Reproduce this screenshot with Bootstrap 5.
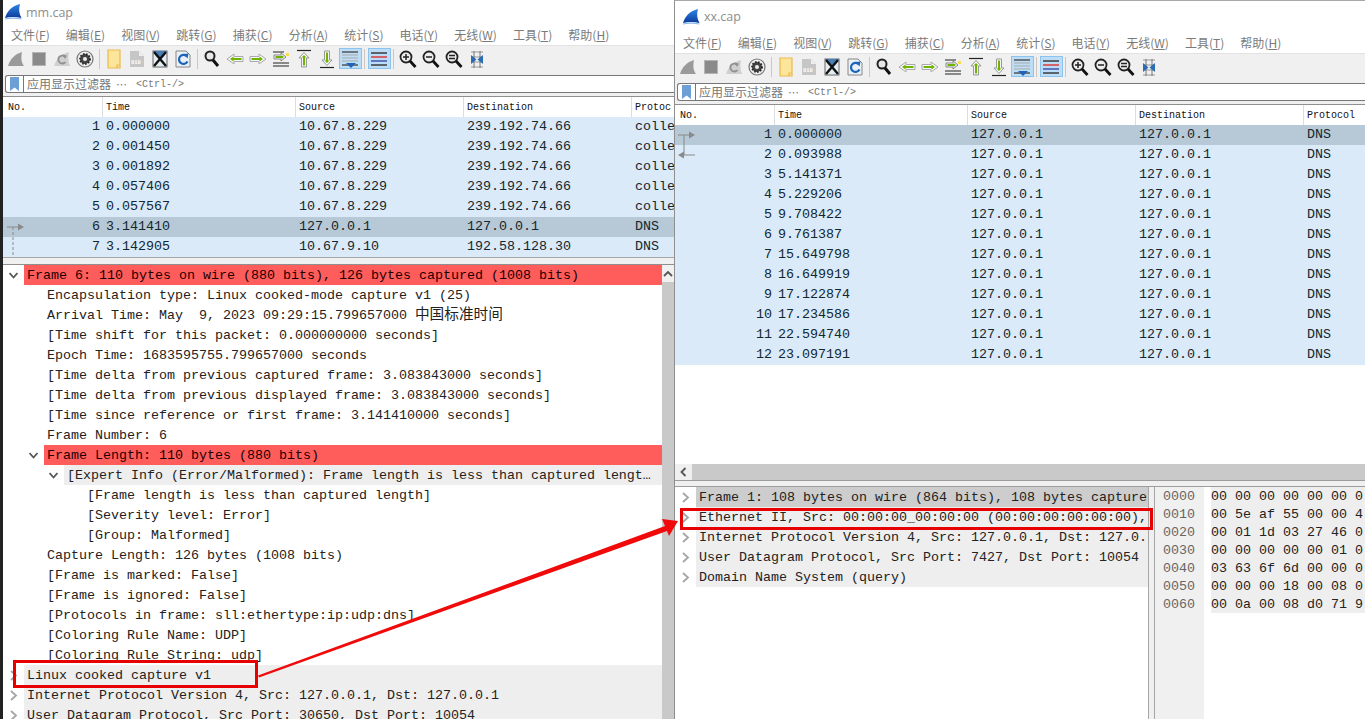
<!DOCTYPE html>
<html lang="zh-CN">
<head>
<meta charset="UTF-8" />
<title>mm.cap / xx.cap</title>
<link href="https://cdn.jsdelivr.net/npm/bootstrap@5.3.0/dist/css/bootstrap.min.css" rel="stylesheet" />
<style>
  body { background: #3a3a3a; width: 1365px; height: 719px; overflow: hidden; }
  /* windows on the desktop */
  .ws-win { top: 0; height: 719px; background: #fff; overflow: hidden; }
  #win-left { left: 3px; width: 672px; }
  #win-right { left: 674px; width: 691px; border-left: 1px solid #8f8f8f; border-top: 1px solid #a8a8a8; }
  .ws-title { height: 24px; color: #8e8e8e; font: 12.5px "Open Sans", "Liberation Sans", sans-serif; padding-left: 2px; gap: 4px; flex: none; }
  #win-right .ws-title { height: 31px; padding-left: 8px; }
  .ws-menu { height: 21px; padding-left: 8px; gap: 16.1px; color: #7b7b7b; font: 12px "Noto Sans CJK SC", sans-serif; flex: none; }
  .ws-menu u { text-underline-offset: 1px; }
  .ws-tools { height: 28px; background: #f0f0f0; border-top: 1px solid #e2e2e2; padding: 0 0 2px 1.5px; flex: none; }
  .ws-btn { width: 23px; height: 21px; flex: none; }
  .ws-btn.on { background: #bddcf5; border: 1px solid #8cc2ee; }
  .ws-btn svg { width: 20px; height: 20px; }
  .ws-sep { width: 6px; height: 20px; flex: none; position: relative; }
  .ws-sep::after { content: ""; position: absolute; left: 2px; top: 0; width: 1px; height: 20px; background: #c8c8c8; }
  .ws-filter-wrap { height: 24px; padding: 2px 0 3px 2px; background: #f0f0f0; border-bottom: 1px solid #8f8f8f; flex: none; }
  .ws-filter { height: 18px; border: 1.5px solid #777; border-right: 0; border-radius: 3px 0 0 3px; background: #fff; color: #777; font: 12px "Noto Sans CJK SC", sans-serif; }
  .ws-mark { width: 18px; height: 100%; border-right: 1px solid #777; flex: none; }
  .ws-mark svg { width: 9px; height: 14px; }
  .ws-label { margin: -2px 0 0 3px; }
  .ws-hint { font: 10px "Liberation Mono", monospace; margin-left: 8px; }
  .ws-dots { margin-left: 5px; font-size: 11px; letter-spacing: 1px; }
  .ws-head { height: 20px; font: 10px "Liberation Mono", monospace; color: #111; flex: none; }
  .ws-head > div { border-left: 1px solid #dcdcdc; padding-left: 3px; line-height: 22px; flex: none; }
  .ws-head > .c0 { width: 99px; border-left: 0; padding-left: 5px; }
  .ws-head > .c1 { width: 193px; }
  .ws-head > .c2, .ws-head > .c3 { width: 168px; }
  .ws-head > .c4 { width: 40px; overflow: hidden; }
  #win-right .ws-head > .c4 { width: 70px; }
  .ws-mono { font: 13.33px/20px "Liberation Mono", monospace; white-space: pre; }
  .pk-row { height: 20px; background: #daeaf9; color: #12272e; }
  .pk-row.sel { background: #b7c8d6; }
  .pk-no { width: 103px; padding-right: 6px; text-align: right; flex: none; }
  .pk-time { width: 193px; flex: none; }
  .pk-addr { width: 168px; flex: none; }
  #list-left { height: 140px; flex: none; }
  #list-right { height: 339px; flex: none; }
  .pk-mark { position: absolute; left: 0; top: 0; pointer-events: none; }
  .ws-split { height: 8px; background: #f0f0f0; border-top: 1px solid #a6a6a6; border-bottom: 1px solid #8f8f8f; flex: none; }
  .ws-scroll-h { height: 16px; background: #c9c9c9; flex: none; }
  .ws-scroll-h span { width: 17px; background: #f0f0f0; }
  .ws-split2 { height: 7px; background: #f0f0f0; border-top: 1px solid #9c9c9c; border-bottom: 1px solid #9c9c9c; flex: none; }
  .tr-row { height: 20px; color: #222; }
  .tr-arrow { flex: none; padding-right: 6px; height: 20px; }
  .tr-arrow svg { width: 9px; height: 20px; }
  .l0 .tr-arrow { width: 21px; }
  .l1 .tr-arrow { width: 41px; }
  .l2 .tr-arrow { width: 61px; }
  .l3 .tr-arrow { width: 81px; }
  .tr-txt { padding-left: 3px; flex: 1 1 0; min-width: 0; overflow: hidden; line-height: 22px; }
  .tr-txt.bad { background: #ff5c5c; color: #1a0000; }
  .tr-txt.soft { background: #eee; }
  .tr-txt.cur { background: #cdcdcd; }
  .tr-cjk { font-family: "Liberation Mono", "Noto Sans CJK SC", monospace; }
  .tr-cn { font-size: 14.67px; line-height: 20px; }
  #tree-left { width: 659px; flex: none; }
  #bar-left { width: 13px; background: #c9c9c9; border-right: 1px solid #8f8f8f; flex: none; }
  #bar-left span { height: 17px; background: #f0f0f0; }
  #tree-right { width: 473px; flex: none; }
  #hex-split { width: 7px; flex: none; background: #f0f0f0; border-left: 1px solid #a6a6a6; border-right: 1px solid #a6a6a6; }
  .hx-off { width: 49px; flex: none; background: #f0f0f0; padding-left: 8px; color: #666; }
  .hx-body { margin-left: 7px; flex: 1 1 0; overflow: hidden; color: #222; }
  .hx-body div { background: #eee; }
  .hx-off div, .hx-body div { font: 13.33px/20px "Liberation Mono", monospace; height: 18px; white-space: pre; }
  .hx-wrap { height: 232px; }
  #overlay { left: 0; top: 0; pointer-events: none; }
  .red-box { border: 3px solid #e60000; }
  #box-a { left: 13px; top: 660px; width: 245px; height: 28px; }
  #box-b { left: 680px; top: 508px; width: 473px; height: 22px; }
  #edge { left: 0; top: 0; width: 3px; height: 719px; background: #222; }
</style>
</head>
<body class="position-relative">
<svg width="0" height="0" class="position-absolute">
  <defs>
    <linearGradient id="gf" x1="0" y1="0" x2="0" y2="1"><stop offset="0" stop-color="#2e86ea"/><stop offset="1" stop-color="#0c3a98"/></linearGradient>
    <symbol id="i-logo" viewBox="0 0 17 16"><path d="M0 14C2 8 6 2 15 0C13.500 5 14 10 16.500 14C11 12.800 5 12.800 0 14Z" fill="url(#gf)"/><path d="M0 14.500C5 13.300 11 13.300 16.500 14.500L16.500 15.500C11 14.500 5 14.500 0 15.500Z" fill="#8dbcec"/></symbol>
    <symbol id="i-fin" viewBox="0 0 20 20"><path d="M2 17C4 10 9 5 16 3C15 8 15 13 18 17Z" fill="#9a9a9a"/></symbol>
    <symbol id="i-stop" viewBox="0 0 20 20"><rect x="3.500" y="3.500" width="13" height="13" fill="#8a8a8a" stroke="#b5b5b5"/></symbol>
    <symbol id="i-refin" viewBox="0 0 20 20"><path d="M2 17C4 10 9 5 17 3C16 8 16 13 18 17Z" fill="#cfcfcf"/><path d="M13 7.500A4 4 0 1 0 13.500 13" fill="none" stroke="#8f8f8f" stroke-width="1.800"/><path d="M11 6L15 6.500L13 10Z" fill="#8f8f8f"/></symbol>
    <symbol id="i-gear" viewBox="0 0 20 20"><circle cx="10" cy="10" r="8" fill="#eee" stroke="#777" stroke-width="1.200"/><circle cx="10" cy="10" r="5" fill="#444"/><circle cx="10" cy="10" r="5" fill="none" stroke="#222" stroke-width="1.800" stroke-dasharray="1.500 1.500"/><circle cx="10" cy="10" r="2" fill="#eee"/></symbol>
    <symbol id="i-open" viewBox="0 0 20 20"><path d="M4 1H16V19H4Z" fill="#fde69c" stroke="#eab94a" stroke-width="1.200"/><path d="M13 19V16H16" fill="none" stroke="#eab94a" stroke-width="1.200"/></symbol>
    <symbol id="i-bin" viewBox="0 0 20 20"><path d="M3 2H12L17 7V18H3Z" fill="#c6c6c6"/><path d="M12 2V7H17" fill="#eee"/><text x="4" y="15" font-size="5.500" font-family="Liberation Mono" font-weight="700" fill="#fff">010</text></symbol>
    <symbol id="i-close" viewBox="0 0 20 20"><rect x="3" y="2" width="14" height="16" fill="#e4edf4" stroke="#666"/><path d="M3 2H17L10 10Z" fill="#4a7fb5"/><path d="M4 3L16 17M16 3L4 17" stroke="#111" stroke-width="2.400"/></symbol>
    <symbol id="i-reload" viewBox="0 0 20 20"><path d="M3 2H13L17 6V18H3Z" fill="#e9f0f7" stroke="#888"/><path d="M13.500 7A4.500 4.500 0 1 0 14.500 12.500" fill="none" stroke="#1e63b8" stroke-width="2.200"/><path d="M10.500 5L15.500 4.500L14.500 9.500Z" fill="#1e63b8"/></symbol>
    <symbol id="i-find" viewBox="0 0 20 20"><circle cx="8" cy="7" r="4.500" fill="#e8e8e8" stroke="#222" stroke-width="2"/><path d="M11 11L16 17" stroke="#111" stroke-width="3"/></symbol>
    <symbol id="i-back" viewBox="0 0 20 20"><path d="M2 10L9 5V7.500H18V12.500H9V15Z" fill="#f6f6f6" stroke="#aaa"/><path d="M5 10L8.500 7.500V9H16.500V11H8.500V12.500Z" fill="#6fb400"/></symbol>
    <symbol id="i-fwd" viewBox="0 0 20 20"><path d="M18 10L11 5V7.500H2V12.500H11V15Z" fill="#f6f6f6" stroke="#aaa"/><path d="M15 10L11.500 7.500V9H3.500V11H11.500V12.500Z" fill="#6fb400"/></symbol>
    <symbol id="i-jump" viewBox="0 0 20 20"><path d="M2 3H13M2 14H18M2 17H18" stroke="#222" stroke-width="1.200"/><path d="M15 8L10 4V6H3V10H10V12Z" fill="#f6f6f6" stroke="#888"/><path d="M13 8L10.500 6V7H4.500V9H10.500V10Z" fill="#6fb400"/><rect x="15" y="4" width="3" height="3" fill="#f5dd55"/></symbol>
    <symbol id="i-first" viewBox="0 0 20 20"><path d="M3 1.500H17" stroke="#222" stroke-width="1.200"/><path d="M10 3.500L5 9H7.500V18H12.500V9H15Z" fill="#f6f6f6" stroke="#999"/><path d="M10 6L7.500 8.500H9V16.500H11V8.500H12.500Z" fill="#6fb400"/></symbol>
    <symbol id="i-last" viewBox="0 0 20 20"><path d="M3 18.500H17" stroke="#222" stroke-width="1.200"/><path d="M10 16.500L5 11H7.500V2H12.500V11H15Z" fill="#f6f6f6" stroke="#999"/><path d="M10 14L7.500 11.500H9V3.500H11V11.500H12.500Z" fill="#6fb400"/></symbol>
    <symbol id="i-auto" viewBox="0 0 20 20"><path d="M2 3H18" stroke="#333" stroke-width="1.200"/><path d="M2 6H18M2 9H18M2 12H18" stroke="#aaa"/><path d="M2 16H18" stroke="#333" stroke-width="1.200"/><path d="M6 14H16L11 19Z" fill="#1f63b5"/></symbol>
    <symbol id="i-color" viewBox="0 0 20 20"><path d="M2 4H18" stroke="#222" stroke-width="1.300"/><path d="M2 8H18" stroke="#e02020" stroke-width="1.300"/><path d="M2 12H18" stroke="#2a3ea8" stroke-width="1.300"/><path d="M2 16H18" stroke="#222" stroke-width="1.300"/></symbol>
    <symbol id="i-zin" viewBox="0 0 20 20"><circle cx="8" cy="8" r="5.500" fill="#eee" stroke="#222" stroke-width="1.800"/><path d="M12 12L17.500 18" stroke="#111" stroke-width="2.800"/><path d="M5 8H11M8 5V11" stroke="#222" stroke-width="1.500"/></symbol>
    <symbol id="i-zout" viewBox="0 0 20 20"><circle cx="8" cy="8" r="5.500" fill="#eee" stroke="#222" stroke-width="1.800"/><path d="M12 12L17.500 18" stroke="#111" stroke-width="2.800"/><path d="M5 8H11" stroke="#222" stroke-width="1.500"/></symbol>
    <symbol id="i-z100" viewBox="0 0 20 20"><circle cx="8" cy="8" r="5.500" fill="#eee" stroke="#222" stroke-width="1.800"/><path d="M12 12L17.500 18" stroke="#111" stroke-width="2.800"/><path d="M5 6.500H11M5 9.500H11" stroke="#222" stroke-width="1.300"/></symbol>
    <symbol id="i-cols" viewBox="0 0 20 20"><path d="M4 3H16M4 8H16M4 13H16M4 18H16" stroke="#999"/><path d="M7 2V19M13 2V19" stroke="#777"/><path d="M9.500 10.500L4 6V15ZM10.500 10.500L16 6V15Z" fill="#2b6cb5"/></symbol>
    <symbol id="i-mark" viewBox="0 0 9 14"><path d="M0 0H9V14L4.500 10.500L0 14Z" fill="#6b9fd6"/></symbol>
    <symbol id="i-chev-r" viewBox="0 0 9 20"><path d="M2 6L7 10.500L2 15" fill="none" stroke="#a5a5a5" stroke-width="1.800"/></symbol>
    <symbol id="i-chev-d" viewBox="0 0 9 20"><path d="M0.500 8L4.500 12.500L8.500 8" fill="none" stroke="#555" stroke-width="1.800"/></symbol>
  </defs>
</svg>

<div id="win-left" class="ws-win position-absolute d-flex flex-column"></div>
<div id="win-right" class="ws-win position-absolute d-flex flex-column"></div>
<div id="edge" class="position-absolute"></div>

<!-- 紅框與箭頭 -->
<div id="box-a" class="red-box position-absolute"></div>
<div id="box-b" class="red-box position-absolute"></div>
<svg id="overlay" class="position-absolute" width="1365" height="719">
  <path d="M258 675.500L665 526L662 519L678 521L669 536L667 531L259 677.500Z" fill="#f00a0a"/>
</svg>

<script>
  const menus = [["文件","F"],["编辑","E"],["视图","V"],["跳转","G"],["捕获","C"],["分析","A"],["统计","S"],["电话","Y"],["无线","W"],["工具","T"],["帮助","H"]];
  const tools = ["fin","stop","refin","gear","|","open","bin","close","reload","|","find","back","fwd","jump","first","last","auto*","|","color*","|","zin","zout","z100","cols"];

  function winTop(name, proto) {
    const menu = menus.map(([t, k]) => `<span>${t}(<u>${k}</u>)</span>`).join("");
    const bar = tools.map((t) => {
      if (t === "|") return `<div class="ws-sep"></div>`;
      const on = t.endsWith("*");
      const id = t.replace("*", "");
      return `<div class="ws-btn d-flex align-items-center justify-content-center ${on ? "on" : ""}"><svg><use href="#i-${id}"/></svg></div>`;
    }).join("");
    return `
      <div class="ws-title d-flex align-items-center"><svg width="17" height="16"><use href="#i-logo"/></svg><span>${name}</span></div>
      <div class="ws-menu d-flex align-items-center text-nowrap">${menu}</div>
      <div class="ws-tools d-flex align-items-center">${bar}</div>
      <div class="ws-filter-wrap">
        <div class="ws-filter d-flex align-items-center text-nowrap">
          <div class="ws-mark d-flex align-items-center justify-content-center"><svg><use href="#i-mark"/></svg></div>
          <span class="ws-label">应用显示过滤器</span><span class="ws-dots">⋯</span><span class="ws-hint">&lt;Ctrl-/&gt;</span>
        </div>
      </div>
      <div class="ws-head d-flex text-nowrap">
        <div class="c0">No.</div><div class="c1">Time</div><div class="c2">Source</div><div class="c3">Destination</div><div class="c4">${proto}</div>
      </div>`;
  }

  function rows(list, selected) {
    return list.map((r, i) => `<div class="pk-row ws-mono d-flex ${i === selected ? "sel" : ""}"><div class="pk-no">${i + 1}</div><div class="pk-time">${r[0]}</div><div class="pk-addr">${r[1]}</div><div class="pk-addr">${r[2]}</div><div>${r[3]}</div></div>`).join("");
  }

  function tree(list) {
    const chev = { r: "#i-chev-r", d: "#i-chev-d" };
    return list.map(([lv, txt, cls, c]) => `<div class="tr-row ws-mono d-flex l${lv}"><div class="tr-arrow d-flex justify-content-end">${c ? `<svg><use href="${chev[c]}"/></svg>` : ""}</div><div class="tr-txt tr-cjk ${cls || ""}">${txt}</div></div>`).join("");
  }

  const leftPk = [
    ["0.000000","10.67.8.229","239.192.74.66","colle"],
    ["0.001450","10.67.8.229","239.192.74.66","colle"],
    ["0.001892","10.67.8.229","239.192.74.66","colle"],
    ["0.057406","10.67.8.229","239.192.74.66","colle"],
    ["0.057567","10.67.8.229","239.192.74.66","colle"],
    ["3.141410","127.0.0.1","127.0.0.1","DNS"],
    ["3.142905","10.67.9.10","192.58.128.30","DNS"],
  ];
  const rightPk = ["0.000000","0.093988","5.141371","5.229206","9.708422","9.761387","15.649798","16.649919","17.122874","17.234586","22.594740","23.097191"]
    .map((t) => [t, "127.0.0.1", "127.0.0.1", "DNS"]);

  const leftTree = [
    [0,"Frame 6: 110 bytes on wire (880 bits), 126 bytes captured (1008 bits)","bad","d"],
    [1,"Encapsulation type: Linux cooked-mode capture v1 (25)"],
    [1,`Arrival Time: May  9, 2023 09:29:15.799657000 <span class="tr-cn">中国标准时间</span>`],
    [1,"[Time shift for this packet: 0.000000000 seconds]"],
    [1,"Epoch Time: 1683595755.799657000 seconds"],
    [1,"[Time delta from previous captured frame: 3.083843000 seconds]"],
    [1,"[Time delta from previous displayed frame: 3.083843000 seconds]"],
    [1,"[Time since reference or first frame: 3.141410000 seconds]"],
    [1,"Frame Number: 6"],
    [1,"Frame Length: 110 bytes (880 bits)","bad","d"],
    [2,"[Expert Info (Error/Malformed): Frame length is less than captured lengt…","soft","d"],
    [3,"[Frame length is less than captured length]"],
    [3,"[Severity level: Error]"],
    [3,"[Group: Malformed]"],
    [1,"Capture Length: 126 bytes (1008 bits)"],
    [1,"[Frame is marked: False]"],
    [1,"[Frame is ignored: False]"],
    [1,"[Protocols in frame: sll:ethertype:ip:udp:dns]"],
    [1,"[Coloring Rule Name: UDP]"],
    [1,"[Coloring Rule String: udp]"],
    [0,"Linux cooked capture v1","soft","r"],
    [0,"Internet Protocol Version 4, Src: 127.0.0.1, Dst: 127.0.0.1","soft","r"],
    [0,"User Datagram Protocol, Src Port: 30650, Dst Port: 10054","soft","r"],
  ];
  const rightTree = [
    [0,"Frame 1: 108 bytes on wire (864 bits), 108 bytes capture","cur","r"],
    [0,"Ethernet II, Src: 00:00:00_00:00:00 (00:00:00:00:00:00),","soft","r"],
    [0,"Internet Protocol Version 4, Src: 127.0.0.1, Dst: 127.0.","soft","r"],
    [0,"User Datagram Protocol, Src Port: 7427, Dst Port: 10054","soft","r"],
    [0,"Domain Name System (query)","soft","r"],
  ];
  const hex = [
    ["0000","00 00 00 00 00 00 0"],
    ["0010","00 5e af 55 00 00 4"],
    ["0020","00 01 1d 03 27 46 0"],
    ["0030","00 00 00 00 00 01 0"],
    ["0040","03 63 6f 6d 00 00 0"],
    ["0050","00 00 00 18 00 08 0"],
    ["0060","00 0a 00 08 d0 71 9"],
  ];

  document.getElementById("win-left").innerHTML = winTop("mm.cap", "Protoc") + `
    <div id="list-left" class="position-relative">
      ${rows(leftPk, 5)}
      <svg class="pk-mark" width="30" height="140"><path d="M4 110H15" stroke="#8a8a8a"/><path d="M15 106.500L21 110L15 113.500Z" fill="#8a8a8a"/><path d="M10 110V140" stroke="#8a8a8a" stroke-dasharray="3 2"/></svg>
    </div>
    <div class="ws-split"></div>
    <div class="d-flex flex-grow-1 overflow-hidden">
      <div id="tree-left">${tree(leftTree)}</div>
      <div id="bar-left" class="d-flex flex-column"><span class="d-flex align-items-center justify-content-center"><svg width="10" height="7"><path d="M1 6L5 2L9 6" fill="none" stroke="#555" stroke-width="1.800"/></svg></span></div>
    </div>`;

  document.getElementById("win-right").innerHTML = winTop("xx.cap", "Protocol") + `
    <div id="list-right" class="position-relative">
      ${rows(rightPk, 0)}
      <svg class="pk-mark" width="30" height="60"><path d="M3 10H15" stroke="#8a8a8a"/><path d="M14 6.500L20 10L14 13.500Z" fill="#8a8a8a"/><path d="M9 10V30" stroke="#8a8a8a"/><path d="M8 30H20" stroke="#8a8a8a"/><path d="M9 26.500L3 30L9 33.500Z" fill="#8a8a8a"/></svg>
    </div>
    <div class="ws-scroll-h d-flex"><span class="d-flex align-items-center justify-content-center"><svg width="7" height="10"><path d="M5.500 1L1.500 5L5.500 9" fill="none" stroke="#555" stroke-width="1.800"/></svg></span></div>
    <div class="ws-split2"></div>
    <div class="d-flex flex-grow-1 overflow-hidden">
      <div id="tree-right" class="overflow-hidden">${tree(rightTree)}</div>
      <div id="hex-split"></div>
      <div class="flex-grow-1 overflow-hidden">
        <div class="d-flex hx-wrap">
          <div class="hx-off">${hex.map((h) => `<div>${h[0]}</div>`).join("")}</div>
          <div class="hx-body">${hex.map((h) => `<div>${h[1]}</div>`).join("")}</div>
        </div>
      </div>
    </div>`;
</script>
<script src="https://cdn.jsdelivr.net/npm/bootstrap@5.3.0/dist/js/bootstrap.bundle.min.js"></script>
</body>
</html>
